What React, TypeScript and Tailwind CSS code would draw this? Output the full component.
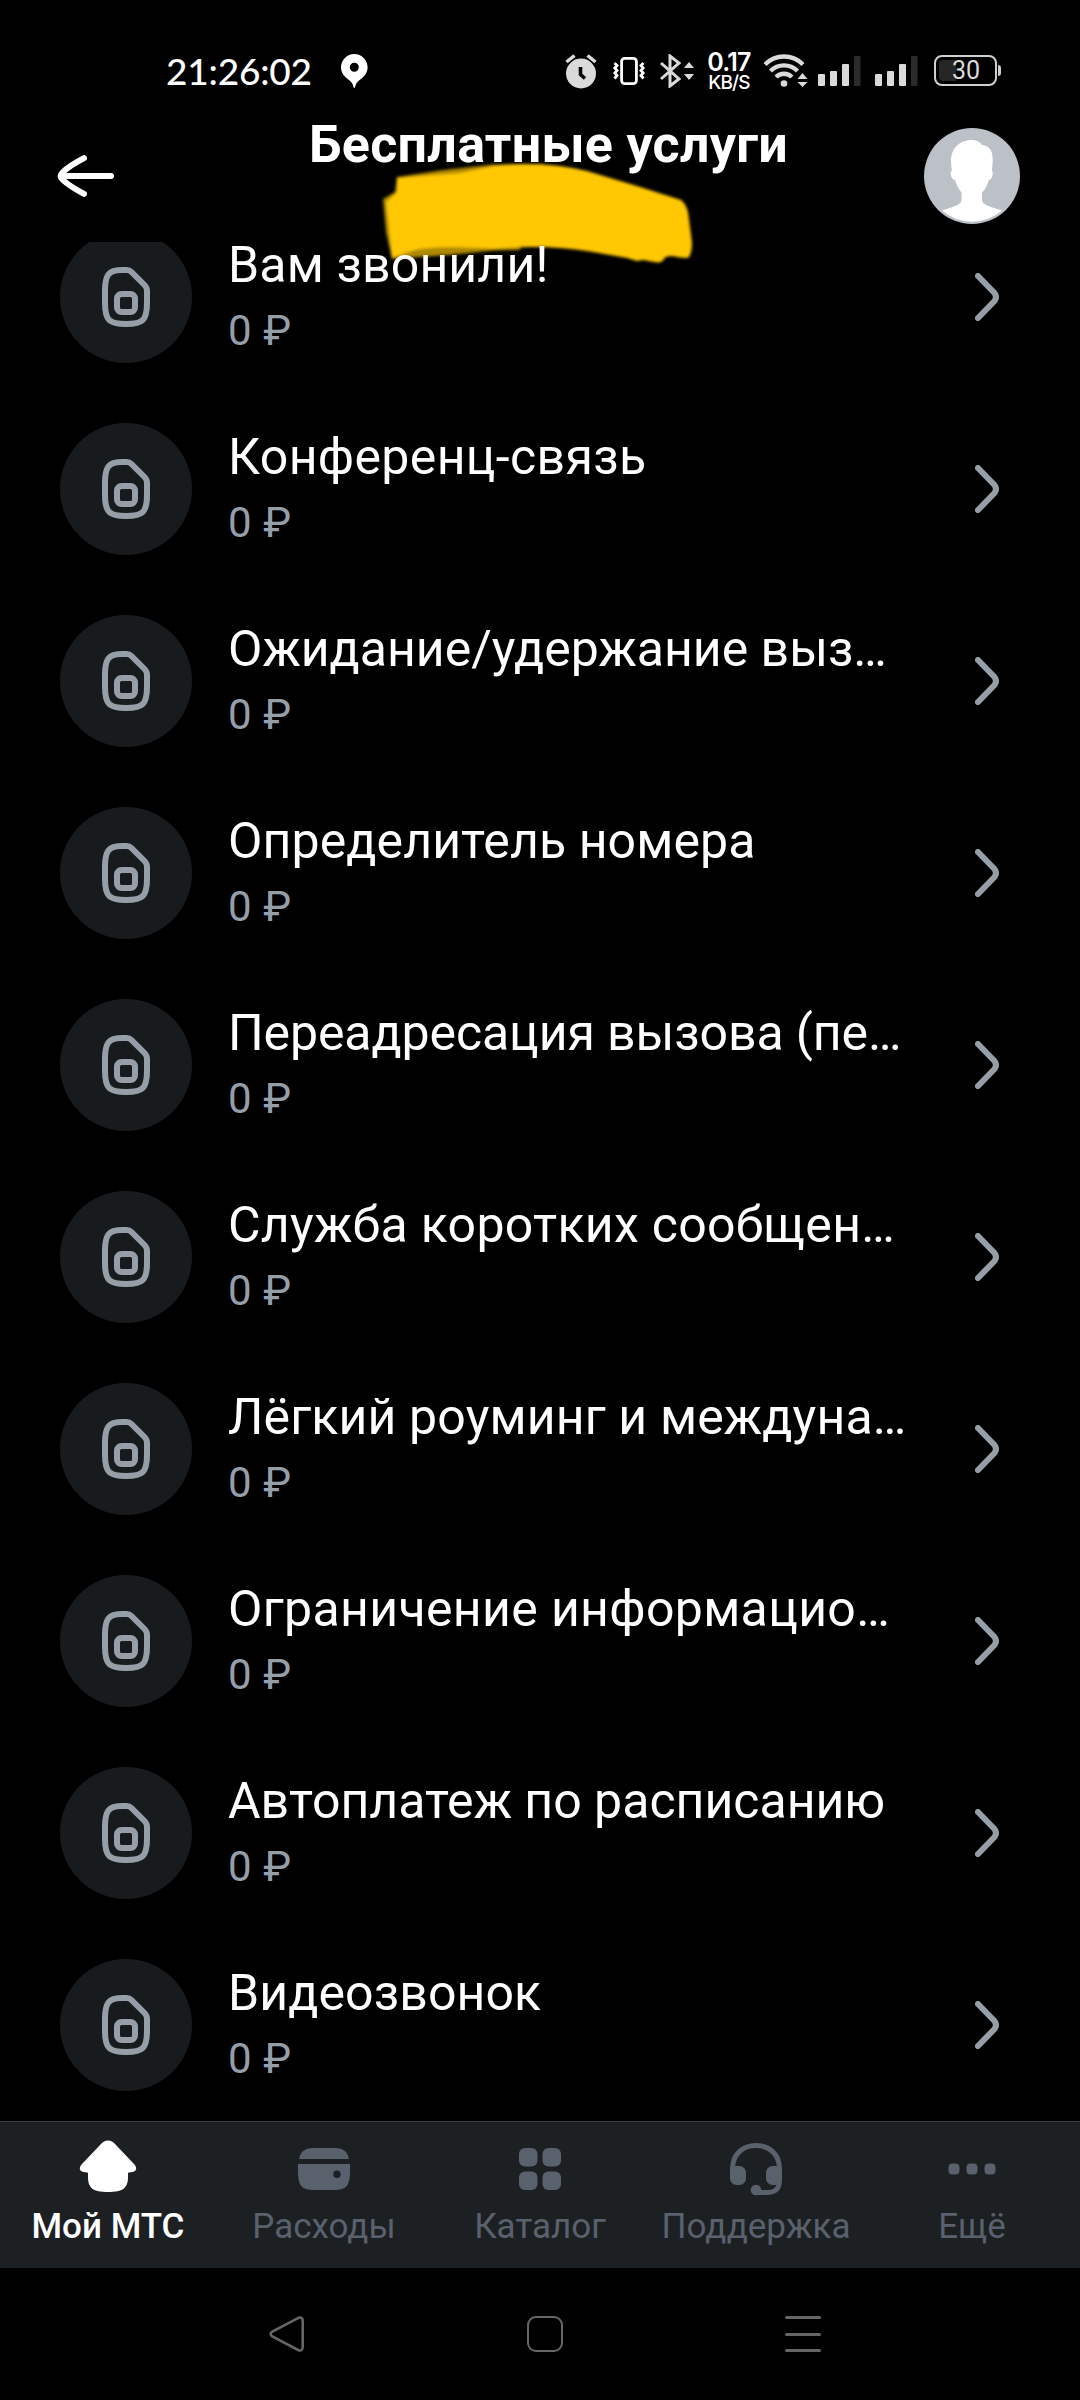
import React from 'react';

const services = [
  { name: 'Вам звонили!', tracking: 'tracking-[0.15px]' },
  { name: 'Конференц-связь', tracking: 'tracking-[0.35px]' },
  { name: 'Ожидание/удержание выз…', tracking: 'tracking-[0px]' },
  { name: 'Определитель номера', tracking: 'tracking-[0.1px]' },
  { name: 'Переадресация вызова (пе…', tracking: 'tracking-[-0.1px]' },
  { name: 'Служба коротких сообщен…', tracking: 'tracking-[0.3px]' },
  { name: 'Лёгкий роуминг и междуна…', tracking: 'tracking-[0.15px]' },
  { name: 'Ограничение информацио…', tracking: 'tracking-[0.35px]' },
  { name: 'Автоплатеж по расписанию', tracking: 'tracking-[0px]' },
  { name: 'Видеозвонок', tracking: 'tracking-[0.1px]' },
];

function SignalIcon() {
  return (
    <svg width="43" height="30" viewBox="0 0 43 30" fill="#dadada">
      <rect x="0" y="18" width="7" height="12" rx="1" />
      <rect x="12" y="15" width="7" height="15" rx="1" />
      <rect x="24" y="8" width="7" height="22" rx="1" />
      <rect x="36" y="0" width="6.5" height="30" rx="1" fill="#2b2b2b" />
    </svg>
  );
}

function StatusBar() {
  return (
    <div className="flex h-[110px] items-start pt-[52px] pl-[166px] text-white">
      <span className="w-[175px] font-['Lato',sans-serif] text-[37px] leading-[37px] font-medium tracking-[-0.2px]">
        21:26:02
      </span>
      <svg className="mt-0.5" width="27" height="34" viewBox="0 0 27 34">
        <path
          fill="#fff"
          fillRule="evenodd"
          d="M13.3 0C6 0 0 6 0 13.3c0 6 3.500 9.500 8 12.700 2.500 2 4 4 4.300 6.500q1 3 2 0c.3-2.500 1.800-4.500 4.300-6.500 4.500-3.200 8-6.700 8-12.700C26.600 6 20.600 0 13.300 0zM13.300 8.800a4.500 4.500 0 1 1 0 9 4.500 4.500 0 0 1 0-9z"
        />
      </svg>
      <svg className="mt-0.5 ml-[197px]" width="32" height="35" viewBox="0 0 32 35">
        <circle cx="16" cy="19.500" r="15" fill="#dadada" />
        <path d="M1.500 8l8-6.500M30.500 8L22.500 1.500" stroke="#dadada" strokeWidth="3.500" />
        <path d="M15.500 13v7.500l4.500 4" stroke="#000" strokeWidth="3.600" fill="none" />
      </svg>
      <svg className="mt-[5px] ml-4" width="32" height="28" viewBox="0 0 32 28" fill="none" stroke="#fff">
        <rect x="8.600" y="1.400" width="14.800" height="25.200" rx="3" strokeWidth="2.800" />
        <path
          d="M1.500 6l2.500 2.500-2.200 2.500 2.200 2.500-2.200 2.500 2.200 2.500-2.500 3M30.500 6L28 8.500l2.200 2.500-2.200 2.500 2.200 2.500-2.200 2.500 2.500 3"
          strokeWidth="2.800"
        />
      </svg>
      <svg className="mt-0.5 ml-[15px]" width="35" height="34" viewBox="0 0 35 34">
        <path d="M1 9l18 16-9 7V2L19 9 1 25" fill="none" stroke="#dadada" strokeWidth="3" />
        <path d="M29 8l5 6H24zM29 26l5-6H24z" fill="#dadada" />
      </svg>
      <div className="ml-3 flex w-[44px] flex-col items-center font-['Inter',sans-serif] font-semibold whitespace-nowrap">
        <span className="text-[25px] leading-[20px] tracking-[-0.8px]">0.17</span>
        <span className="mt-px text-[19px] leading-[19px] font-medium tracking-[-0.8px]">KB/S</span>
      </div>
      <svg className="mt-px ml-3" width="46" height="35" viewBox="0 0 46 35">
        <g fill="none" stroke="#dadada" strokeWidth="4.400">
          <path d="M2 11.500a26.500 26.500 0 0 1 38 0" />
          <path d="M7.500 18a19 19 0 0 1 27 0" />
          <path d="M13 24a11.500 11.500 0 0 1 16 0" />
        </g>
        <circle cx="21" cy="30.500" r="3.300" fill="#dadada" />
        <path d="M39.500 18.500L45.500 26v3h-12v-3z" fill="#000" />
        <path d="M39.500 20l5 6H34.500zM39.500 34l5-5H34.500z" fill="#dadada" />
      </svg>
      <div className="mt-1 ml-[9px] flex gap-3.5">
        <SignalIcon />
        <SignalIcon />
      </div>
      <div className="mt-[3px] ml-[16px] flex items-center">
        <div className="flex h-[31px] w-[63px] items-center rounded-[8px] border-[2.500px] border-[#cfcfcf] p-[3px]">
          <div className="h-[21px] w-[17px] rounded-l-[4px] bg-[#262626]" />
          <span className="-ml-[4px] font-['Roboto',sans-serif] text-[25px] leading-[21px] text-[#dadada]">30</span>
        </div>
        <div className="ml-px h-[11px] w-[2.500px] rounded-r-sm bg-[#cfcfcf]" />
      </div>
    </div>
  );
}

function Header() {
  return (
    <header className="relative flex h-[132px] items-center pr-[60px] pl-[57px]">
      <svg
        width="58"
        height="42"
        viewBox="0 0 58 42"
        fill="none"
        stroke="#fff"
        strokeWidth="6"
        strokeLinecap="round"
        strokeLinejoin="round"
      >
        <path d="M54 21H5M27 3.200Q12 11 5.500 17.500Q2 21 5.500 24.500Q12 31 27 38.800" />
      </svg>
      <h1 className="ml-[58px] flex-1 self-start pt-[5px] text-center text-[52px] leading-[60px] font-bold tracking-[0.3px] text-white">
        Бесплатные услуги
      </h1>
      <svg width="96" height="96" viewBox="0 0 96 96">
        <circle cx="48" cy="48" r="48" fill="#bbc1c7" />
        <path
          fill="#fff"
          d="M47.500 12C35 12 27 21 27 33c0 4 .5 7 1 9.500-2 0-2 9 3 9.500 1.500 5 3.500 9 6.500 12.500V72c0 5-9 7-19.500 10.500a46 46 0 0 0 60 0C67 79 58 77 58 72v-7.500c3.500-3.500 5.500-7.500 6.800-12.500 4.200-.5 4.700-9 3-9.500.5-3 .9-6.500.9-11C68.700 23 66 18 58 17c-2-3.500-6-5-10.500-5z"
        />
      </svg>
      {/* marker stroke over the subtitle */}
      <svg
        className="absolute top-[45px] left-[370px] blur-[1.500px]"
        width="340"
        height="115"
        viewBox="370 155 340 115"
      >
        <path
          fill="#ae8900"
          d="M397 177L443 170L493 164.500L543 164L520 250L493 250.500L450 255L420 257L392 259L386 232L383 199L395 192Z"
        />
        <path
          fill="#ffc803"
          d="M397 178L460 173L493 166Q543 160 587 171L637 186L681 200Q686 204 688 212L692 243Q692 254 688 258Q680 258 672 256Q665 256 664 259Q662 263 657 262.500L643 260L637 261L627 258L593 252Q545 244 493 249Q440 245 415 250L392 258L386 202L397 192Z"
        />
      </svg>
    </header>
  );
}

function SimIcon() {
  return (
    <svg width="48" height="60" viewBox="0 0 48 60" fill="none" stroke="#969fa8" strokeWidth="6">
      <path d="M19 3H24.500Q27.500 3 29.500 5L42.500 18Q45 20.500 45 24V36C45 53 41 57 24 57C7 57 3 53 3 36V24C3 9 6 3 19 3Z" />
      <rect x="15" y="27" width="18" height="18" rx="4.500" />
    </svg>
  );
}

function ServiceRow({ name, tracking }: { name: string; tracking: string }) {
  return (
    <li className="flex h-48 items-center pr-[81px] pl-[60px]">
      <div className="flex size-[132px] shrink-0 items-center justify-center rounded-full bg-[#181b1d]">
        <SimIcon />
      </div>
      <div className="ml-[36px] flex-1 whitespace-nowrap">
        <p className={`text-[50px] leading-[66px] text-white ${tracking}`}>{name}</p>
        <p className="pt-px text-[42px] leading-[63px] tracking-[0.6px] text-[#969fa8]">0 ₽</p>
      </div>
      <svg
        width="24"
        height="48"
        viewBox="0 0 24 48"
        fill="none"
        stroke="#969fa8"
        strokeWidth="6"
        strokeLinecap="round"
      >
        <path d="M3 3L19 19.500Q23 24 19 28.500L3 45" />
      </svg>
    </li>
  );
}

function Tab({ label, active, children }: { label: string; active?: boolean; children: React.ReactNode }) {
  return (
    <div className={`flex flex-col items-center ${active ? 'text-white' : 'text-[#59616c]'}`}>
      <svg className="mt-[17px]" width="60" height="60" viewBox="0 0 60 60" fill="currentColor">
        {children}
      </svg>
      <span className={`mt-2 text-[35px] leading-[40px] whitespace-nowrap ${active ? 'font-medium' : ''}`}>
        {label}
      </span>
    </div>
  );
}

function TabBar() {
  return (
    <nav className="grid h-[147px] grid-cols-5 border-t border-[#3b3e41] bg-[#1d2023]">
      <Tab label="Мой МТС" active>
        <path d="M30 1.500c3 0 5 1.500 7 3.500l19 20c4 4.500 2 7.500-2 8l-4 .8V38c0 11-5 15-20 15s-20-4-20-15v-4.200L6 33c-4-.5-6-3.500-2-8L23 5c2-2 4-3.500 7-3.500z" />
      </Tab>
      <Tab label="Расходы">
        <path d="M5 20C7 11 12 9 21 9h18c9 0 14 2 16 11z" />
        <path
          fillRule="evenodd"
          d="M4 25h52v6c0 16-3 20-17 20H21C7 51 4 47 4 31zM43 31.500a3.700 3.700 0 1 0 0 7.400 3.700 3.700 0 0 0 0-7.400z"
        />
      </Tab>
      <Tab label="Каталог">
        <rect x="9" y="9" width="18.500" height="18.500" rx="6" />
        <rect x="32.500" y="9" width="18.500" height="18.500" rx="6" />
        <rect x="9" y="32.500" width="18.500" height="18.500" rx="6" />
        <rect x="32.500" y="32.500" width="18.500" height="18.500" rx="6" />
      </Tab>
      <Tab label="Поддержка">
        <path
          d="M6.500 34V30C6.500 15 17 6.500 30 6.500S53.500 15 53.500 30V40C53.500 49 51 53.500 40 53.500H30"
          fill="none"
          stroke="currentColor"
          strokeWidth="5"
        />
        <rect x="4" y="27" width="16" height="19" rx="6.500" />
        <rect x="40" y="27" width="16" height="19" rx="6.500" />
        <circle cx="30" cy="51" r="5.300" />
      </Tab>
      <Tab label="Ещё">
        <rect x="6.500" y="24.500" width="11" height="11" rx="4" />
        <rect x="24.500" y="24.500" width="11" height="11" rx="4" />
        <rect x="42.500" y="24.500" width="11" height="11" rx="4" />
      </Tab>
    </nav>
  );
}

function SystemNav() {
  return (
    <div className="flex h-[132px] items-start pt-12 pl-[269px]">
      <svg width="36" height="36" viewBox="0 0 36 36" fill="none" stroke="#666" strokeWidth="2.600">
        <path d="M29.500 1.800L3.300 15.500Q0 18 3.300 20.500L29.500 34.200Q33.700 35.500 33.700 31V5Q33.700 .5 29.500 1.800Z" />
      </svg>
      <div className="ml-[222px] size-9 rounded-[9px] border-[2.500px] border-[#666]" />
      <div className="ml-[222px] flex h-9 w-9 flex-col justify-between">
        <span className="h-[3px] rounded-full bg-[#666]" />
        <span className="h-[3px] rounded-full bg-[#666]" />
        <span className="h-[3px] rounded-full bg-[#666]" />
      </div>
    </div>
  );
}

export default function App() {
  return (
    <div className="flex h-[2400px] w-[1080px] flex-col overflow-hidden bg-black font-['Roboto','Noto_Sans',sans-serif]">
      <StatusBar />
      <Header />
      <main className="relative flex-1 overflow-hidden">
        <ul className="-mt-[41px]">
          {services.map((item) => (
            <ServiceRow key={item.name} name={item.name} tracking={item.tracking} />
          ))}
        </ul>
      </main>
      <TabBar />
      <SystemNav />
    </div>
  );
}
